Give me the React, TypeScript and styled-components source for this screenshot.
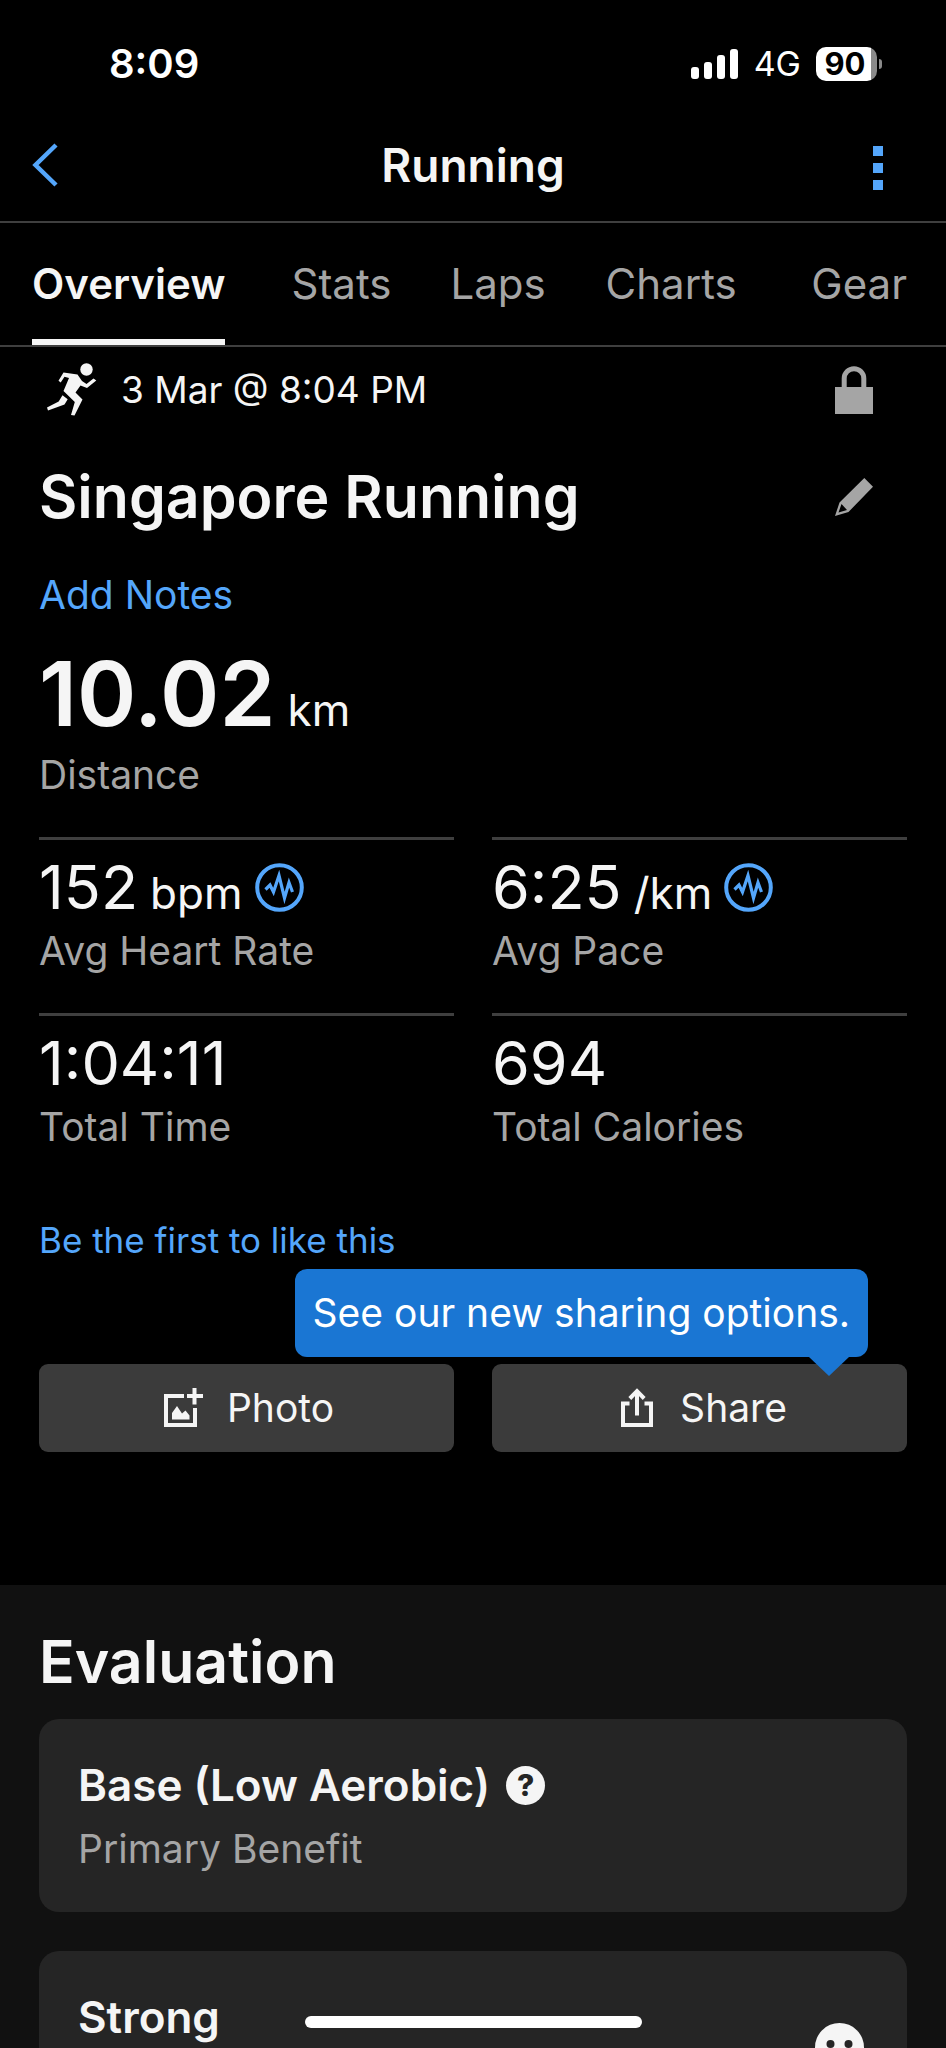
import React from "react";
import styled, { createGlobalStyle, css } from "styled-components";

const color = {
  bg: "#000000",
  section: "#111111",
  card: "#252525",
  button: "#3b3b3b",
  line: "#3f3f3f",
  text: "#f5f5f5",
  muted: "#a5a5a5",
  link: "#54a6fb",
  tip: "#1a76d3",
};

const GlobalStyle = createGlobalStyle`
  * { box-sizing: border-box; }
  body {
    margin: 0;
    background: ${color.bg};
    color: ${color.text};
    font-family: Inter, "Liberation Sans", sans-serif;
  }
  h1, h2, h3, p, dl, dt, dd { margin: 0; font: inherit; }
  button { font: inherit; color: inherit; background: none; border: 0; padding: 0; cursor: pointer; }
  a { color: inherit; text-decoration: none; }
  svg { display: block; flex: none; }
`;

const Screen = styled.div`
  position: relative;
  height: 100vh;
  display: flex;
  flex-direction: column;
  overflow: hidden;
`;

const StatusBar = styled.div`
  flex: none;
  height: 108px;
  padding: 20px 64px 0 109px;
  display: flex;
  align-items: center;
  justify-content: space-between;
`;

const Clock = styled.span`
  font-size: 40px;
  line-height: 48px;
  font-weight: 600;
  color: #fff;
`;

const StatusIcons = styled.div`
  display: flex;
  align-items: center;
  gap: 15px;
`;

const Network = styled.span`
  font-size: 34px;
  line-height: 40px;
  color: #fff;
`;

const Battery = styled.div`
  display: flex;
  align-items: center;
  gap: 2px;
`;

const BatteryBody = styled.span`
  width: 61px;
  height: 34px;
  border-radius: 10px;
  padding-right: 3px;
  background: linear-gradient(to right, #fff 90%, #8a8a8a 90%);
  color: #000;
  font-size: 31px;
  line-height: 34px;
  font-weight: 700;
  text-align: center;
`;

const BatteryTip = styled.span`
  width: 3px;
  height: 10px;
  border-radius: 0 4px 4px 0;
  background: #8a8a8a;
`;

const Header = styled.header`
  flex: none;
  height: 115px;
  padding: 0 32px;
  display: grid;
  grid-template-columns: 1fr auto 1fr;
  align-items: center;
  border-bottom: 2px solid ${color.line};
`;

const HeaderTitle = styled.h1`
  font-size: 46px;
  line-height: 56px;
  font-weight: 600;
`;

const IconButton = styled.button<{ $end?: boolean; $pad?: number }>`
  justify-self: ${(p) => (p.$end ? "end" : "start")};
  padding: 0 ${(p) => p.$pad ?? 0}px;
  color: ${color.link};
`;

const Tabs = styled.nav`
  flex: none;
  padding: 0 39px 0 32px;
  display: grid;
  grid-template-columns: 261fr 160fr 156fr 207fr 91fr;
  justify-items: start;
  border-bottom: 2px solid ${color.line};
`;

const Tab = styled.a<{ $active?: boolean }>`
  font-size: 42px;
  line-height: 122px;
  white-space: nowrap;
  color: ${color.muted};
  ${(p) =>
    p.$active &&
    css`
      color: ${color.text};
      font-weight: 600;
      box-shadow: inset 0 -6px 0 ${color.text};
    `}
`;

const Content = styled.main`
  flex: 1;
  min-height: 0;
  overflow-y: auto;
  scrollbar-width: none;
`;

const Summary = styled.section`
  padding: 0 39px 133px;
`;

const Row = styled.div<{ $height: number }>`
  height: ${(p) => p.$height}px;
  padding-right: 34px;
  display: flex;
  align-items: center;
  justify-content: space-between;
`;

const When = styled.p`
  display: flex;
  align-items: center;
  gap: 24px;
  padding-left: 8px;
  font-size: 37px;
  line-height: 48px;
`;

const Title = styled.h2`
  font-size: 59px;
  line-height: 72px;
  font-weight: 600;
`;

const Link = styled.a<{ $small?: boolean }>`
  display: block;
  width: fit-content;
  font-size: ${(p) => (p.$small ? 35 : 39)}px;
  line-height: 48px;
  color: ${color.link};
`;

const Notes = styled.div`
  padding: 10px 0;
`;

const Metrics = styled.dl`
  display: grid;
  grid-template-columns: 1fr 1fr;
  column-gap: 38px;
`;

const Metric = styled.div<{ $hero?: boolean }>`
  display: flex;
  flex-direction: column-reverse;
  justify-content: flex-end;
  gap: 8px;
  padding: 15px 0 38px;
  border-top: ${(p) => (p.$hero ? "0" : `3px solid ${color.line}`)};
  ${(p) => p.$hero && "grid-column: 1 / -1;"}
`;

const MetricLabel = styled.dt`
  font-size: 39px;
  line-height: 48px;
  color: ${color.muted};
`;

const MetricValue = styled.dd<{ $hero?: boolean }>`
  display: flex;
  align-items: baseline;
  gap: 12px;
  white-space: nowrap;
  font-size: ${(p) => (p.$hero ? 90 : 61)}px;
  line-height: ${(p) => (p.$hero ? 99 : 64)}px;
  font-weight: ${(p) => (p.$hero ? 600 : 400)};
`;

const Unit = styled.span`
  font-size: 44px;
  line-height: 48px;
  font-weight: 400;
`;

const Badge = styled.span`
  align-self: center;
`;

const Like = styled.div`
  padding: 27px 0 100px;
`;

const Actions = styled.div`
  position: relative;
  display: grid;
  grid-template-columns: 1fr 1fr;
  gap: 38px;
`;

const ActionButton = styled.button`
  height: 88px;
  padding-left: 5px;
  border-radius: 9px;
  background: ${color.button};
  display: flex;
  align-items: center;
  justify-content: center;
  gap: 24px;
  font-size: 39px;
  line-height: 48px;
`;

const Tooltip = styled.div`
  position: absolute;
  right: 39px;
  bottom: calc(100% + 7px);
  padding: 20px 18px;
  border-radius: 12px;
  background: ${color.tip};
  color: #fff;
  font-size: 39px;
  line-height: 48px;
  white-space: nowrap;
  &::after {
    content: "";
    position: absolute;
    top: 100%;
    right: 19px;
    border: solid transparent;
    border-width: 19px 20px 0;
    border-top-color: ${color.tip};
  }
`;

const Evaluation = styled.section`
  padding: 41px 39px 80px;
  background: ${color.section};
`;

const SectionTitle = styled.h2`
  margin-bottom: 21px;
  font-size: 59px;
  line-height: 72px;
  font-weight: 600;
`;

const Card = styled.article`
  display: flex;
  align-items: center;
  justify-content: space-between;
  min-height: 193px;
  padding: 38px 43px 39px 39px;
  border-radius: 20px;
  background: ${color.card};
  & + & { margin-top: 39px; }
`;

const CardText = styled.div`
  align-self: flex-start;
`;

const CardTitle = styled.h3`
  display: flex;
  align-items: center;
  gap: 16px;
  margin-bottom: 12px;
  font-size: 44px;
  line-height: 56px;
  font-weight: 600;
`;

const CardLabel = styled.p`
  font-size: 39px;
  line-height: 48px;
  color: ${color.muted};
`;

const Help = styled.button`
  width: 39px;
  height: 39px;
  border-radius: 50%;
  background: ${color.text};
  color: ${color.card};
  font-size: 30px;
  line-height: 39px;
  font-weight: 800;
`;

const HomeBar = styled.div`
  position: absolute;
  left: 50%;
  bottom: 20px;
  width: 337px;
  height: 12px;
  margin-left: -168px;
  border-radius: 6px;
  background: #fff;
`;

const Signal = () => (
  <svg width="48" height="30" viewBox="0 0 48 30" fill="#fff" aria-label="Signal strength">
    <rect x="0" y="18" width="8" height="12" rx="3" />
    <rect x="13" y="13" width="8" height="17" rx="3" />
    <rect x="26" y="6" width="8" height="24" rx="3" />
    <rect x="39" y="0" width="8" height="30" rx="3" />
  </svg>
);

const Back = () => (
  <svg width="26" height="44" viewBox="0 0 26 44" fill="none" stroke="currentColor" strokeWidth="4.500">
    <path d="M24 2 3.500 22 24 42" />
  </svg>
);

const Dots = () => (
  <svg width="10" height="52" viewBox="0 0 10 52" fill="currentColor">
    <path d="M0 7h10v10H0zM0 24h10v10H0zM0 41h10v10H0z" />
  </svg>
);

const Runner = () => (
  <svg width="50" height="54" viewBox="0 0 50 54" fill={color.text}>
    <circle cx="39.500" cy="6.500" r="6.200" />
    <path d="M16.500 9.500 30.500 11.500 35 18 39.500 21 46.500 15.500 49.300 17.500 40 25 33.500 22.500 28.500 29.500 35.500 36.500 27.500 52.500 24 52 27.800 39 16.500 28 22 15 17.500 13.700 13.700 19.500 11.500 17.800Z" />
    <path d="M15.500 32.200 20.700 36.200 17.500 41.500 1 47.500 0 44.500 11.700 38.500Z" />
  </svg>
);

const Lock = () => (
  <svg width="38" height="50" viewBox="0 0 38 50">
    <path d="M9.200 23V13.500a9.800 9.800 0 0 1 19.600 0V23" fill="none" stroke={color.muted} strokeWidth="5" />
    <path d="M0 22h38v27H0z" fill={color.muted} />
  </svg>
);

const Pencil = () => (
  <svg width="38" height="38" viewBox="0 0 38 38" fill={color.muted}>
    <path fillRule="evenodd" d="M29.300 0 38 8.700 13.500 34 0 38 4.500 24.500ZM6.500 26 3.500 34.500 12 32Z" />
  </svg>
);

const Pulse = () => (
  <svg width="49" height="49" viewBox="0 0 49 49" fill="none" stroke={color.link}>
    <circle cx="24.500" cy="24.500" r="22.300" strokeWidth="4" />
    <path d="M10.500 26.500 15 22 18.500 29 24 12.500 29.500 35 34 19.500 37.500 29" strokeWidth="3.200" />
  </svg>
);

const PhotoIcon = () => (
  <svg width="39" height="40" viewBox="0 0 39 40" fill={color.text}>
    <path d="M0 6h20v4H4v25h25V20h4v19H0z" />
    <path d="M28.500 0h4v6H39v4h-6.500v6.500h-4V10H23V6h5.500z" />
    <path d="M8 31.500v-6.500L13 18l5 7.500 3.500-3 4 5v4z" />
  </svg>
);

const ShareIcon = () => (
  <svg width="39" height="40" viewBox="-4 0 39 40" fill="none" stroke={color.text} strokeWidth="4">
    <path d="M8.500 15.500H2V37h28V15.500h-6.500" />
    <path d="M16 27.500V4M8.800 10.500 16 3.200l7.200 7.300" />
  </svg>
);

const Smile = () => (
  <svg width="49" height="49" viewBox="0 0 49 49">
    <circle cx="24.500" cy="24.500" r="24.500" fill={color.text} />
    <circle cx="15.500" cy="21" r="4" fill={color.card} />
    <circle cx="33.500" cy="21" r="4" fill={color.card} />
    <path d="M13 31q11.500 11 23 0" fill="none" stroke={color.card} strokeWidth="3.500" />
  </svg>
);

const tabs = ["Overview", "Stats", "Laps", "Charts", "Gear"];

const metrics = [
  { label: "Distance", value: "10.02", unit: "km", hero: true },
  { label: "Avg Heart Rate", value: "152", unit: "bpm", graph: true },
  { label: "Avg Pace", value: "6:25", unit: "/km", graph: true },
  { label: "Total Time", value: "1:04:11" },
  { label: "Total Calories", value: "694" },
];

export default function App() {
  return (
    <Screen>
      <GlobalStyle />
      <StatusBar>
        <Clock>8:09</Clock>
        <StatusIcons>
          <Signal />
          <Network>4G</Network>
          <Battery>
            <BatteryBody>90</BatteryBody>
            <BatteryTip />
          </Battery>
        </StatusIcons>
      </StatusBar>
      <Header>
        <IconButton aria-label="Back">
          <Back />
        </IconButton>
        <HeaderTitle>Running</HeaderTitle>
        <IconButton $end $pad={31} aria-label="More options">
          <Dots />
        </IconButton>
      </Header>
      <Tabs>
        {tabs.map((tab, i) => (
          <Tab key={tab} href={`#${tab.toLowerCase()}`} $active={i === 0}>
            {tab}
          </Tab>
        ))}
      </Tabs>
      <Content>
        <Summary>
          <Row $height={86}>
            <When>
              <Runner />
              3 Mar @ 8:04 PM
            </When>
            <IconButton aria-label="Privacy">
              <Lock />
            </IconButton>
          </Row>
          <Row $height={128}>
            <Title>Singapore Running</Title>
            <IconButton aria-label="Edit title">
              <Pencil />
            </IconButton>
          </Row>
          <Notes>
            <Link href="#notes">Add Notes</Link>
          </Notes>
          <Metrics>
            {metrics.map((m) => (
              <Metric key={m.label} $hero={m.hero}>
                <MetricLabel>{m.label}</MetricLabel>
                <MetricValue $hero={m.hero}>
                  {m.value}
                  {m.unit && <Unit>{m.unit}</Unit>}
                  {m.graph && (
                    <Badge>
                      <Pulse />
                    </Badge>
                  )}
                </MetricValue>
              </Metric>
            ))}
          </Metrics>
          <Like>
            <Link $small href="#like">
              Be the first to like this
            </Link>
          </Like>
          <Actions>
            <ActionButton>
              <PhotoIcon />
              Photo
            </ActionButton>
            <ActionButton>
              <ShareIcon />
              Share
            </ActionButton>
            <Tooltip role="tooltip">See our new sharing options.</Tooltip>
          </Actions>
        </Summary>
        <Evaluation>
          <SectionTitle>Evaluation</SectionTitle>
          <Card>
            <CardText>
              <CardTitle>
                Base (Low Aerobic)
                <Help aria-label="About primary benefit">?</Help>
              </CardTitle>
              <CardLabel>Primary Benefit</CardLabel>
            </CardText>
          </Card>
          <Card>
            <CardText>
              <CardTitle>Strong</CardTitle>
            </CardText>
            <Smile />
          </Card>
        </Evaluation>
      </Content>
      <HomeBar />
    </Screen>
  );
}
